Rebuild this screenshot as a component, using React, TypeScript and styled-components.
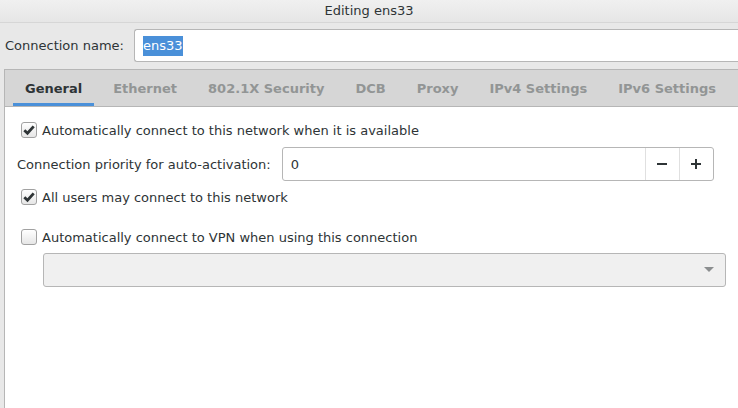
import React from "react";
import styled, { createGlobalStyle } from "styled-components";

const Global = createGlobalStyle`
  html, body { margin: 0; padding: 0; }
  body {
    width: 738px; height: 408px; overflow: hidden;
    background: #e8e8e8;
    font-family: "DejaVu Sans", "Liberation Sans", sans-serif;
    font-size: 13px;
    color: #2e3436;
  }
`;

const Window = styled.div`
  width: 738px;
  height: 408px;
  display: flex;
  flex-direction: column;
  background: #e8e8e8;
  overflow: hidden;
`;

const TitleBar = styled.div`
  height: 23px;
  flex: none;
  display: flex;
  align-items: center;
  justify-content: center;
  background: linear-gradient(#f0f0f0, #e6e6e6);
  border-bottom: 1px solid #d6d6d6;
  color: #2e3436;
  box-sizing: border-box;
  padding-bottom: 1px;
`;

const NameRow = styled.div`
  display: flex;
  align-items: center;
  padding: 6px 0 0 5px;
  gap: 10px;
  height: 33px;
  flex: none;
`;

const Label = styled.span`
  white-space: nowrap;
  color: #2e3436;
`;

const TextEntry = styled.div`
  flex: 1;
  height: 33px;
  box-sizing: border-box;
  background: #fff;
  border: 1px solid #b6b6b6;
  border-right: none;
  border-radius: 3px 0 0 3px;
  display: flex;
  align-items: center;
  padding-left: 8px;
  margin-right: -4px;
`;

const Selected = styled.span`
  background: #4a90d9;
  color: #fff;
  padding: 2px 0 3px;
`;

const Notebook = styled.div`
  margin: 7px 0 0 4px;
  flex: 1;
  display: flex;
  flex-direction: column;
  border-left: 1px solid #b6b6b6;
  border-top: 1px solid #b6b6b6;
  background: #fff;
  margin-right: -2px;
`;

const TabBar = styled.div`
  height: 37px;
  box-sizing: border-box;
  background: #d6d6d6;
  border-bottom: 1px solid #b6b6b6;
  display: flex;
  gap: 7px;
  padding-left: 8px;
`;

const Tab = styled.div<{ $active?: boolean }>`
  padding: 0 12px;
  display: flex;
  align-items: center;
  font-weight: bold;
  color: ${(p) => (p.$active ? "#2e3436" : "#929595")};
  box-shadow: ${(p) => (p.$active ? "inset 0 -3px 0 #4a90d9" : "none")};
  white-space: nowrap;
`;

const Page = styled.div`
  display: flex;
  flex-direction: column;
  padding: 14px 0 0 12px;
`;

const CheckRow = styled.label<{ $mt?: number }>`
  display: flex;
  align-items: center;
  gap: 5px;
  margin-left: 4px;
  margin-top: ${(p) => p.$mt ?? 0}px;
  height: 18px;
`;

const Box = styled.span<{ $checked?: boolean }>`
  width: 16px;
  height: 16px;
  box-sizing: border-box;
  border: 1px solid #a1a1a1;
  border-radius: 3px;
  background: linear-gradient(#ffffff, #e6e6e6);
  display: flex;
  align-items: center;
  justify-content: center;
  flex: none;
`;

const PriorityRow = styled.div`
  display: flex;
  align-items: center;
  gap: 11px;
  margin-top: 8px;
`;

const SpinBox = styled.div`
  width: 432px;
  height: 34px;
  box-sizing: border-box;
  border: 1px solid #b6b6b6;
  border-radius: 3px;
  background: #fff;
  display: flex;
  align-items: stretch;
`;

const SpinValue = styled.div`
  flex: 1;
  display: flex;
  align-items: center;
  padding-left: 8px;
`;

const SpinButton = styled.div`
  width: 33px;
  border-left: 1px solid #e0e0e0;
  display: flex;
  align-items: center;
  justify-content: center;
`;

const Combo = styled.div`
  margin: 7px 0 0 26px;
  width: 683px;
  height: 34px;
  box-sizing: border-box;
  border: 1px solid #b6b6b6;
  border-radius: 3px;
  background: #f0f0f0;
  display: flex;
  align-items: center;
  justify-content: flex-end;
  padding-right: 10px;
`;

const Check = () => (
  <svg width="14" height="14" viewBox="0 0 14 14">
    <path d="M2.3 7.2 L5.5 10.3 L11.7 3.4" fill="none" stroke="#2e3436" strokeWidth="2.8" strokeLinecap="butt" strokeLinejoin="miter" />
  </svg>
);

const Minus = () => (
  <svg width="12" height="12" viewBox="0 0 12 12">
    <rect x="1" y="5" width="10" height="2" fill="#2e3436" />
  </svg>
);

const Plus = () => (
  <svg width="12" height="12" viewBox="0 0 12 12">
    <rect x="1" y="5" width="10" height="2" fill="#2e3436" />
    <rect x="5" y="1" width="2" height="10" fill="#2e3436" />
  </svg>
);

const Arrow = () => (
  <svg width="12" height="8" viewBox="0 0 12 8">
    <path d="M1 1 L11 1 L6 6 Z" fill="#8b8e8f" />
  </svg>
);

const tabs = ["General", "Ethernet", "802.1X Security", "DCB", "Proxy", "IPv4 Settings", "IPv6 Settings"];

export default function App() {
  return (
    <>
      <Global />
      <Window>
        <TitleBar>Editing ens33</TitleBar>
        <NameRow>
          <Label>Connection name:</Label>
          <TextEntry>
            <Selected>ens33</Selected>
          </TextEntry>
        </NameRow>
        <Notebook>
          <TabBar>
            {tabs.map((t, i) => (
              <Tab key={t} $active={i === 0}>{t}</Tab>
            ))}
          </TabBar>
          <Page>
            <CheckRow>
              <Box $checked><Check /></Box>
              Automatically connect to this network when it is available
            </CheckRow>
            <PriorityRow>
              <Label>Connection priority for auto-activation:</Label>
              <SpinBox>
                <SpinValue>0</SpinValue>
                <SpinButton><Minus /></SpinButton>
                <SpinButton><Plus /></SpinButton>
              </SpinBox>
            </PriorityRow>
            <CheckRow $mt={7}>
              <Box $checked><Check /></Box>
              All users may connect to this network
            </CheckRow>
            <CheckRow $mt={22}>
              <Box />
              Automatically connect to VPN when using this connection
            </CheckRow>
            <Combo><Arrow /></Combo>
          </Page>
        </Notebook>
      </Window>
    </>
  );
}
